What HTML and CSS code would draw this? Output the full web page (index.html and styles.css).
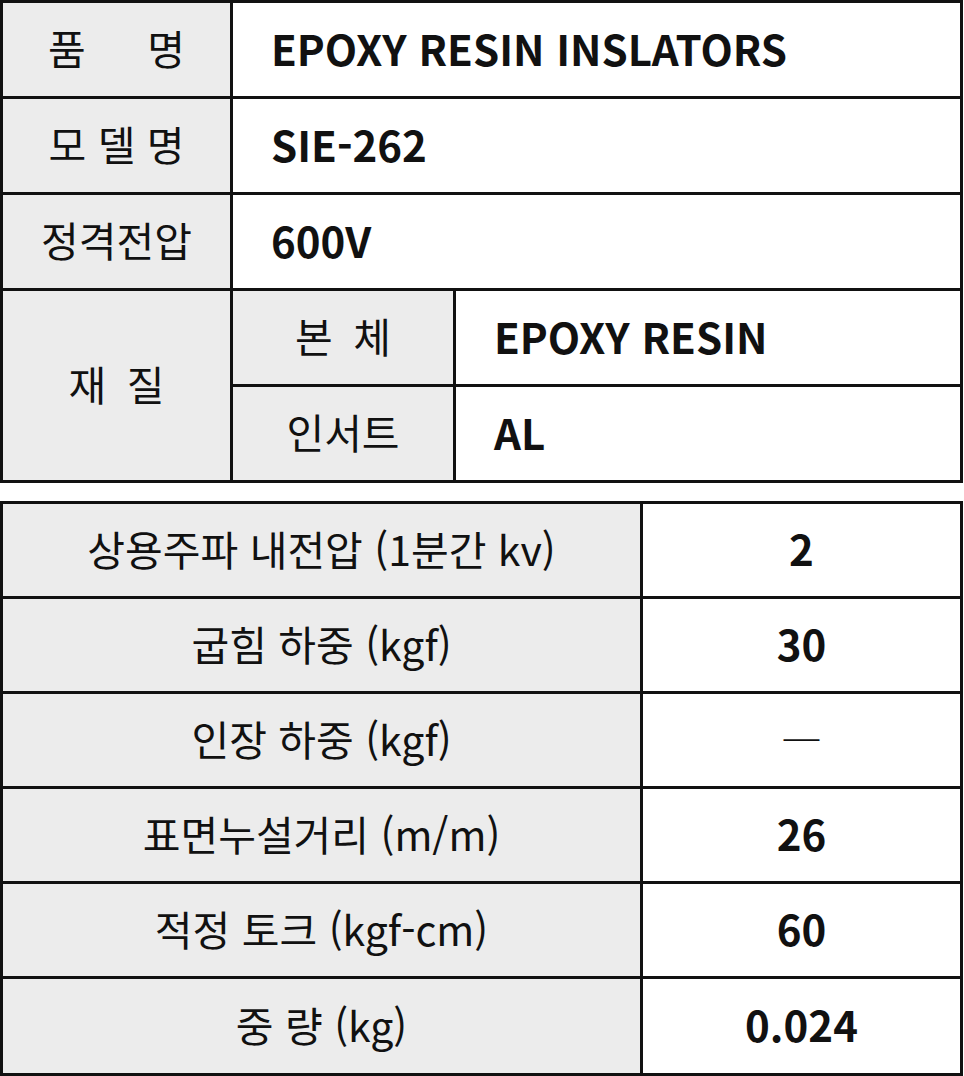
FILE: index.html
```html
<!DOCTYPE html>
<html lang="ko">
<head>
<meta charset="utf-8">
<link rel="stylesheet" href="styles.css">
</head>
<body>
<table class="spec spec-top">
  <colgroup><col class="c1"><col class="c2"><col class="c3"></colgroup>
  <tr>
    <td class="label">품&emsp;&ensp;명</td>
    <td class="value" colspan="2">EPOXY RESIN INSLATORS</td>
  </tr>
  <tr>
    <td class="label">모 델 명</td>
    <td class="value" colspan="2">SIE-262</td>
  </tr>
  <tr>
    <td class="label">정격전압</td>
    <td class="value" colspan="2">600V</td>
  </tr>
  <tr>
    <td class="label" rowspan="2">재&ensp;질</td>
    <td class="label">본&ensp;체</td>
    <td class="value">EPOXY RESIN</td>
  </tr>
  <tr>
    <td class="label">인서트</td>
    <td class="value">AL</td>
  </tr>
</table>
<table class="spec spec-bottom">
  <colgroup><col class="b1"><col class="b2"></colgroup>
  <tr><td class="label">상용주파 내전압 (1분간 kv)</td><td class="num">2</td></tr>
  <tr><td class="label">굽힘 하중 (kgf)</td><td class="num">30</td></tr>
  <tr><td class="label">인장 하중 (kgf)</td><td class="num dash">―</td></tr>
  <tr><td class="label">표면누설거리 (m/m)</td><td class="num">26</td></tr>
  <tr><td class="label">적정 토크 (kgf-cm)</td><td class="num">60</td></tr>
  <tr><td class="label">중 량 (kg)</td><td class="num">0.024</td></tr>
</table>
</body>
</html>
```
FILE: styles.css
```css
html, body {
  margin: 0;
  padding: 0;
  background: #fff;
}
body {
  font-family: "Noto Sans CJK KR", "Noto Sans", sans-serif;
  color: #111;
}
.spec {
  border-collapse: collapse;
  width: 963px;
  table-layout: fixed;
  border: 3px solid #111;
}
.spec td {
  border: 3px solid #111;
  padding: 0 0 3px 0;
  height: 90px;
  font-size: 41px;
  line-height: 1.2;
  vertical-align: middle;
}
.spec-top .c1 { width: 230px; }
.spec-top .c2 { width: 223px; }
.spec-bottom { margin-top: 18px; }
.spec-bottom td { height: 89px; }
.spec-bottom tr:last-child td { height: 91px; }
.spec-bottom .b1 { width: 640px; }
.label {
  background: #ececec;
  text-align: center;
  font-weight: 400;
}
.value {
  background: #fff;
  font-weight: 700;
  font-size: 42px !important;
  padding-left: 38px !important;
  text-align: left;
}
.num {
  background: #fff;
  font-weight: 700;
  font-size: 42px !important;
  text-align: center;
}
.num.dash {
  font-weight: 400;
}
```
